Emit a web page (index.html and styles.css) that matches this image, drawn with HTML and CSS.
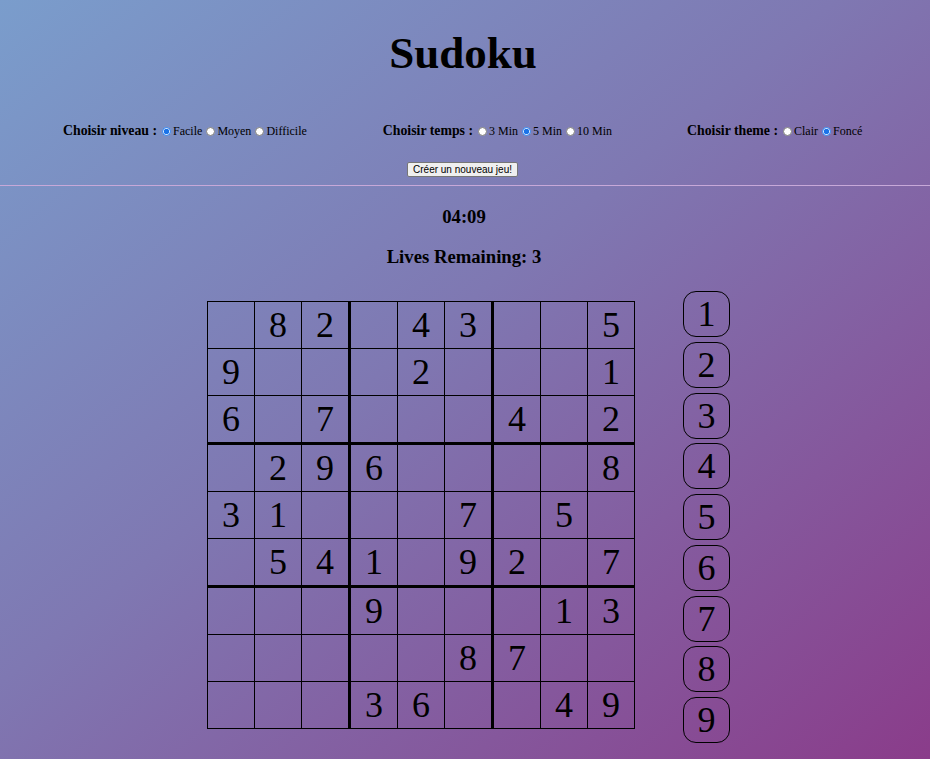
FILE: index.html
```html
<!DOCTYPE html>
<html lang="fr">
<head>
<meta charset="utf-8">
<title>Sudoku</title>
<link rel="stylesheet" href="styles.css">
</head>
<body>
<header class="top">
  <h1 class="title">Sudoku</h1>
  <form class="options">
    <div class="group g1">
      <span class="label">Choisir niveau :</span>
      <label><input type="radio" name="niveau" checked>Facile</label>
      <label><input type="radio" name="niveau">Moyen</label>
      <label><input type="radio" name="niveau">Difficile</label>
    </div>
    <div class="group g2">
      <span class="label">Choisir temps :</span>
      <label><input type="radio" name="temps">3 Min</label>
      <label><input type="radio" name="temps" checked>5 Min</label>
      <label><input type="radio" name="temps">10 Min</label>
    </div>
    <div class="group g3">
      <span class="label">Choisir theme :</span>
      <label><input type="radio" name="theme">Clair</label>
      <label><input type="radio" name="theme" checked>Foncé</label>
    </div>
  </form>
  <div class="btnrow"><button type="button" class="newgame">Créer un nouveau jeu!</button></div>
</header>
<hr class="sep">
<main>
  <div class="timer">04:09</div>
  <div class="lives">Lives Remaining: 3</div>
  <div class="game">
    <table class="board" id="board"></table>
    <div class="pad" id="pad"></div>
  </div>
</main>
<script src="app.js"></script>
</body>
</html>
```
FILE: styles.css
```css
html, body {
  margin: 0;
  padding: 0;
}
body {
  min-height: 759px;
  background: linear-gradient(to bottom right, #7a9dcc 0%, #7f78b2 45%, #8a3c8a 100%);
  font-family: "Liberation Serif", "Times New Roman", serif;
  color: #000;
}
.top {
  padding-top: 27px;
}
.title {
  margin: 0;
  padding-right: 4px;
  text-align: center;
  font-size: 45px;
  font-weight: bold;
  line-height: 52px;
}
.options {
  display: flex;
  align-items: center;
  margin-top: 42px;
  padding-left: 63px;
  height: 20px;
}
.group {
  display: flex;
  align-items: center;
  white-space: nowrap;
}
.g2 { margin-left: 76px; }
.g3 { margin-left: 75px; }
.label {
  font-weight: bold;
  font-size: 13.8px;
  margin-right: 1px;
}
.group label {
  display: flex;
  align-items: center;
  font-size: 12px;
}
.group input[type="radio"] {
  width: 9px;
  height: 9px;
  margin: 0 2px 0 4px;
  accent-color: #1a73e8;
}
.btnrow {
  display: flex;
  justify-content: center;
  margin-top: 21px;
}
.newgame {
  font-family: "Liberation Sans", Arial, sans-serif;
  font-size: 10px;
  padding: 1px 5px;
  margin-left: -5px;
  background: #efefef;
  border: 1px solid #767676;
  border-radius: 2px;
  color: #000;
  height: 15px;
  line-height: 11px;
}
.sep {
  margin: 8px 0 0 0;
  border: 0;
  border-top: 1px solid #c7a8d8;
  height: 0;
}
main {
  display: flex;
  flex-direction: column;
  align-items: center;
}
.timer {
  font-weight: bold;
  font-size: 18.7px;
  margin-top: 20px;
  line-height: 22px;
  margin-left: -2px;
}
.lives {
  font-weight: bold;
  font-size: 18.7px;
  margin-top: 18px;
  line-height: 22px;
  margin-left: -2px;
}
.game {
  display: flex;
  align-items: flex-start;
  margin-top: 23px;
  margin-left: 7px;
}
.board {
  border-collapse: collapse;
  margin-top: 10px;
}
.board td {
  width: 46px;
  height: 46px;
  padding: 0;
  border: 1px solid #000;
  text-align: center;
  vertical-align: middle;
  font-size: 36px;
  line-height: 36px;
}
.board td.tr { border-right: 3px solid #000; }
.board tr.tb td { border-bottom: 3px solid #000; }
.pad {
  display: flex;
  flex-direction: column;
  gap: 4.75px;
  margin-left: 48px;
}
.pad .num {
  width: 45px;
  height: 44px;
  border: 1px solid #000;
  border-radius: 13px;
  display: flex;
  align-items: center;
  justify-content: center;
  font-size: 36px;
  line-height: 36px;
}
```
FILE: app.js
```js
const grid = [
  "082043005",
  "900020001",
  "607000402",
  "029600008",
  "310007050",
  "054109207",
  "000900013",
  "000008700",
  "000360049"
];
const board = document.getElementById("board");
grid.forEach((row, r) => {
  const tr = document.createElement("tr");
  if (r === 2 || r === 5) tr.className = "tb";
  for (let c = 0; c < 9; c++) {
    const td = document.createElement("td");
    if (c === 2 || c === 5) td.className = "tr";
    const v = row[c];
    td.textContent = v === "0" ? "" : v;
    tr.appendChild(td);
  }
  board.appendChild(tr);
});
const pad = document.getElementById("pad");
for (let i = 1; i <= 9; i++) {
  const d = document.createElement("div");
  d.className = "num";
  d.textContent = i;
  pad.appendChild(d);
}
```
